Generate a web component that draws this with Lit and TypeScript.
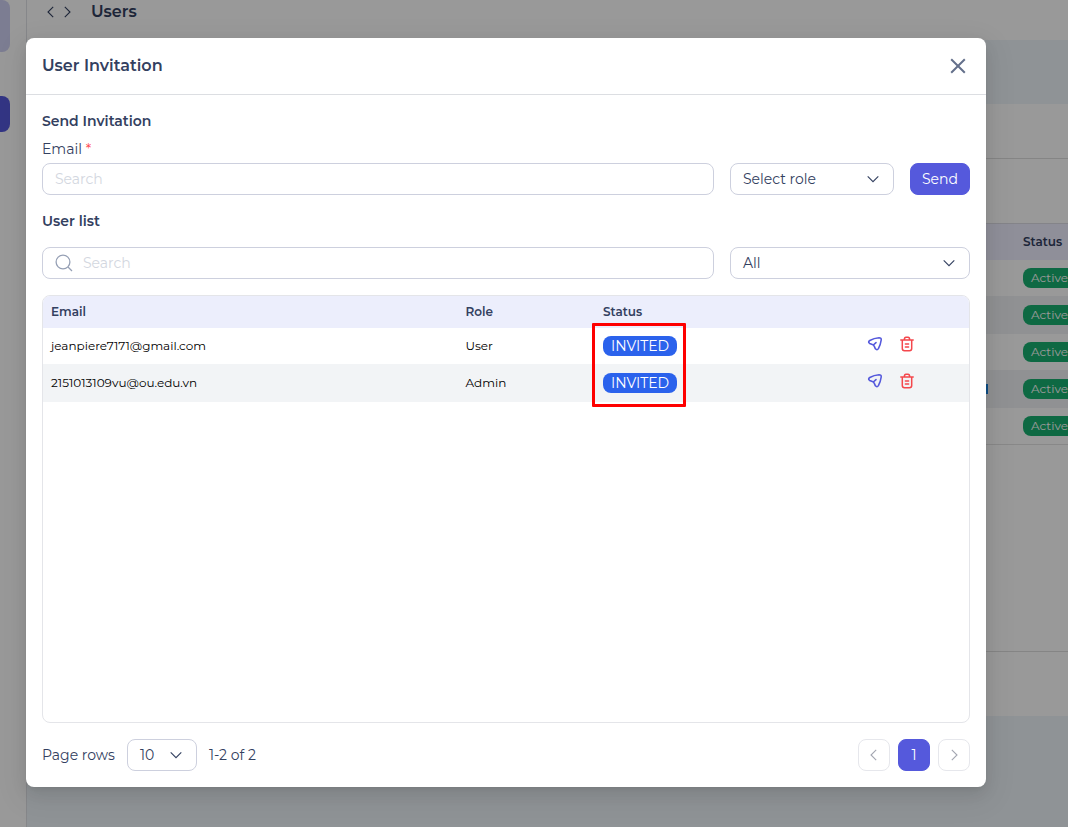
import { LitElement, html, css, svg } from "lit";
import { customElement } from "lit/decorators.js";

const chevron = (dir: string) => {
  const d: Record<string, string> = {
    down: "M1.7 4.4 L7 9.7 L12.3 4.4",
    left: "M9.2 1.8 L4 7 L9.2 12.2",
    right: "M4.8 1.8 L10 7 L4.8 12.2",
  };
  return html`<svg class="chev" width="14" height="14" viewBox="0 0 14 14" fill="none" stroke="currentColor" stroke-width="1.1">${svg`<path d=${d[dir]} />`}</svg>`;
};

const planeIcon = html`<svg width="16" height="16" viewBox="0 0 16 16" fill="none" stroke="#5559dc" stroke-width="1.6" stroke-linecap="round" stroke-linejoin="round">
  <path d="M2.8 4.5 Q7 2 12 1.7 Q14.5 1.7 14.2 4 Q13.6 8.6 11.4 12.6 Q10 14.6 8.4 12.8 L7.2 10.2 Q6.6 8.9 5.4 8.5 L2.6 7.4 Q0.6 6 2.8 4.5 Z M6.3 9 L9 6.6" />
</svg>`;

const trashIcon = html`<svg width="16" height="16" viewBox="0 0 16 16" fill="none" stroke="#f4474c" stroke-width="1.5" stroke-linecap="round" stroke-linejoin="round">
  <path d="M1.8 3.9 H14.2 M5.3 3.7 Q5.4 1.3 7 1.3 H9 Q10.6 1.3 10.7 3.7 M3.3 4.4 V12.6 Q3.3 14.8 5.5 14.8 H10.5 Q12.7 14.8 12.7 12.6 V4.4 M6.4 8 H9.6 M6.4 11 H9.6" />
</svg>`;

const invites = [
  { email: "jeanpiere7171@gmail.com", role: "User" },
  { email: "2151013109vu@ou.edu.vn", role: "Admin" },
];

@customElement("users-page")
class UsersPage extends LitElement {
  static styles = css`
    :host { display: flex; height: 827px; overflow: hidden; background: #eef6fa; color: #334060; }
    svg { display: block; }
    .side { width: 26px; background: #fff; border-right: 1px solid #e0e2e6; flex: none; }
    .tab { width: 10px; border-radius: 0 8px 8px 0; }
    .soft { height: 52px; background: #cfd0f3; margin-bottom: 44px; }
    .solid { height: 36px; background: #5559dc; }
    .main { flex: 1; min-width: 0; }
    .bar { height: 40px; background: #fff; display: flex; padding: 0 0 0 17px; box-sizing: border-box; align-items: flex-start; }
    .arrows { display: flex; gap: 2px; padding-top: 5px; }
    .title { font-size: 16px; font-weight: 600; line-height: 24px; margin-left: 17px; }
    .card { margin-top: 64px; height: 612px; background: #fff; }
    .tabs { height: 54px; border-bottom: 1px solid #dedede; }
    .tools { height: 64px; border-bottom: 1px solid #dcdde4; }
    .head { height: 36px; background: #efeeff; font-size: 12px; font-weight: 600; }
    .line { display: flex; align-items: center; padding-left: 959px; white-space: nowrap; }
    .head .status { margin-top: -2px; }
    .row { height: 36px; }
    .alt { height: 38px; background: #f1f2f5; }
    .status { padding-left: 37px; }
    .last { border-bottom: 1px solid #e3e3e3; }
    .badge { display: block; background: #18b070; color: #fff; height: 20px; line-height: 20px; border-radius: 8px; padding: 0 8px; font-size: 12px; }
    .mark { width: 2px; height: 10px; background: #1680dd; margin-right: -2px; flex: none; }
    .foot { height: 206px; border-bottom: 1px solid #dedede; }
  `;
  render() {
    return html`
      <div class="side"><div class="tab soft"></div><div class="tab solid"></div></div>
      <div class="main">
        <div class="bar"><div class="arrows">${chevron("left")}${chevron("right")}</div><div class="title">Users</div></div>
        <div class="card">
          <div class="tabs"></div><div class="tools"></div>
          <div>
            <div class="head line"><span class="status">Status</span></div>
            ${[0, 1, 2, 3, 4].map((i) => html`<div class="row line ${i % 2 ? "alt" : ""} ${i === 4 ? "last" : ""}">${i === 3 ? html`<i class="mark"></i>` : ""}<span class="status"><span class="badge">Active</span></span></div>`)}
          </div>
          <div class="foot"></div>
        </div>
      </div>`;
  }
}

@customElement("invite-dialog")
class InviteDialog extends LitElement {
  static styles = css`
    :host { display: flex; flex-direction: column; width: 960px; height: 749px; background: #fff; border-radius: 8px; box-shadow: 0 6px 16px rgba(0,0,0,.08), 0 3px 6px -4px rgba(0,0,0,.12), 0 9px 28px 8px rgba(0,0,0,.05); color: #334060; font-size: 14px; }
    svg { display: block; flex: none; }
    header { height: 56px; border-bottom: 1px solid #dcdee2; display: flex; align-items: center; justify-content: space-between; padding: 0 20px 0 16px; font-size: 16px; font-weight: 600; }
    header span { line-height: 24px; }
    .body { padding: 16px 16px 0; display: flex; flex-direction: column; }
    h2 { font-size: 14px; font-weight: 600; line-height: 20px; margin: 0; }
    .label { line-height: 20px; margin: 8px 0 4px; }
    .label b { color: #ff4d4f; font-weight: 400; }
    .line { display: flex; gap: 16px; }
    .box { box-sizing: border-box; height: 32px; border: 1px solid #cdd0de; border-radius: 8px; display: flex; align-items: center; padding: 0 12px; white-space: nowrap; }
    .field { width: 672px; color: #d3d7e0; gap: 10px; }
    .pick { justify-content: space-between; padding-right: 13px; }
    .role { width: 164px; }
    .all { width: 240px; }
    .send { width: 60px; background: #5559dc; border-color: #5559dc; color: #fff; justify-content: center; padding: 0; }
    .list { margin: 16px 0; }
    .table { margin-top: 16px; box-sizing: border-box; height: 428px; border: 1px solid #e4e5e9; border-radius: 8px; overflow: hidden; position: relative; font-size: 12px; color: #000; }
    .tr { display: grid; grid-template-columns: 414.5px 137.5px 265px 1fr; height: 36px; align-items: center; white-space: nowrap; }
    .tr > * { padding-left: 8px; }
    .text { margin-top: -2px; }
    .th { height: 32px; background: #eceefc; font-weight: 600; color: #334060; }
    .alt { background: #f2f4f6; height: 38px; }
    .badge { display: inline-flex; box-sizing: border-box; width: 74px; height: 20px; align-items: center; padding-left: 8px; border-radius: 8px; background: #2b62ec; color: #fff; font-size: 14px; vertical-align: middle; }
    .acts { display: flex; gap: 16px; padding: 0 0 4px 7px; }
    .mark { position: absolute; left: 549px; top: 27px; width: 94px; height: 84px; border: 3px solid #fe0000; box-sizing: border-box; border-radius: 1px; }
    footer { display: flex; align-items: center; margin-top: 16px; }
    .size { width: 70px; margin: 0 12px; padding: 0 13px 0 12px; }
    .pager { margin-left: auto; display: flex; gap: 8px; }
    .pg { width: 32px; padding: 0; justify-content: center; border-color: #e6e7ec; color: #a3a6b1; }
    .on { background: #5559dc; border-color: #5559dc; color: #fff; }
  `;
  render() {
    return html`
      <header><span>User Invitation</span>
        <svg width="16" height="16" viewBox="0 0 16 16" stroke="#64708b" stroke-width="2"><path d="M1.2 1.2 L14.8 14.8 M14.8 1.2 L1.2 14.8" /></svg>
      </header>
      <div class="body">
        <h2>Send Invitation</h2>
        <div class="label">Email <b>*</b></div>
        <div class="line">
          <div class="box field"><span>Search</span></div>
          <div class="box pick role"><span>Select role</span>${chevron("down")}</div>
          <div class="box send"><span>Send</span></div>
        </div>
        <h2 class="list">User list</h2>
        <div class="line">
          <div class="box field">
            <svg width="18" height="18" viewBox="0 0 18 18" fill="none" stroke="#96a0b5" stroke-width="1.3"><circle cx="8" cy="8" r="6.9" /><path d="M13 13 L17 17" /></svg>
            <span>Search</span></div>
          <div class="box pick all"><span>All</span>${chevron("down")}</div>
        </div>
        <div class="table">
          <div class="tr th"><span class="text">Email</span><span class="text">Role</span><span class="text">Status</span><span></span></div>
          ${invites.map((r, i) => html`<div class="tr ${i ? "alt" : ""}">
            <span class="text">${r.email}</span><span class="text">${r.role}</span>
            <span><span class="badge">INVITED</span></span>
            <span class="acts">${planeIcon}${trashIcon}</span></div>`)}
          <div class="mark"></div>
        </div>
        <footer>
          <span>Page rows</span>
          <div class="box pick size"><span>10</span>${chevron("down")}</div>
          <span>1-2 of 2</span>
          <div class="pager"><div class="box pg">${chevron("left")}</div><div class="box pg on">1</div><div class="box pg">${chevron("right")}</div></div>
        </footer>
      </div>`;
  }
}

@customElement("app-root")
class AppRoot extends LitElement {
  static styles = css`
    :host { display: block; position: relative; height: 827px; overflow: hidden; font-family: Montserrat, Inter, sans-serif; }
    .mask { position: absolute; inset: 0; background: rgba(0, 0, 0, 0.4); padding: 38px 0 0 26px; }
  `;
  render() {
    return html`<users-page></users-page><div class="mask"><invite-dialog></invite-dialog></div>`;
  }
}
